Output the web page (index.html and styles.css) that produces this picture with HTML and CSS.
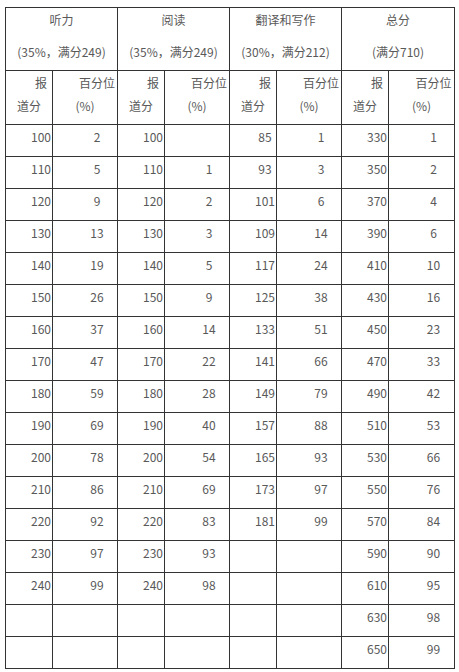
FILE: index.html
```html
<!DOCTYPE html>
<html lang="zh-CN">
<head>
<meta charset="utf-8">
<title>分数与百分位</title>
<link rel="stylesheet" href="styles.css">
</head>
<body>
<table class="score-table">
  <colgroup>
    <col class="c-score"><col class="c-pct">
    <col class="c-score"><col class="c-pct">
    <col class="c-score"><col class="c-pct">
    <col class="c-score"><col class="c-pct-last">
  </colgroup>
  <thead>
    <tr class="head-1">
      <th colspan="2"><p class="line">听力</p><p class="line">(35%，满分249)</p></th>
      <th colspan="2"><p class="line">阅读</p><p class="line">(35%，满分249)</p></th>
      <th colspan="2"><p class="line">翻译和写作</p><p class="line">(30%，满分212)</p></th>
      <th colspan="2"><p class="line">总分</p><p class="line">(满分710)</p></th>
    </tr>
    <tr class="head-2">
      <th>报道分</th><th>百分位(%)</th>
      <th>报道分</th><th>百分位(%)</th>
      <th>报道分</th><th>百分位(%)</th>
      <th>报道分</th><th>百分位(%)</th>
    </tr>
  </thead>
  <tbody>
    <tr><td>100</td><td>2</td><td>100</td><td></td><td>85</td><td>1</td><td>330</td><td>1</td></tr>
    <tr><td>110</td><td>5</td><td>110</td><td>1</td><td>93</td><td>3</td><td>350</td><td>2</td></tr>
    <tr><td>120</td><td>9</td><td>120</td><td>2</td><td>101</td><td>6</td><td>370</td><td>4</td></tr>
    <tr><td>130</td><td>13</td><td>130</td><td>3</td><td>109</td><td>14</td><td>390</td><td>6</td></tr>
    <tr><td>140</td><td>19</td><td>140</td><td>5</td><td>117</td><td>24</td><td>410</td><td>10</td></tr>
    <tr><td>150</td><td>26</td><td>150</td><td>9</td><td>125</td><td>38</td><td>430</td><td>16</td></tr>
    <tr><td>160</td><td>37</td><td>160</td><td>14</td><td>133</td><td>51</td><td>450</td><td>23</td></tr>
    <tr><td>170</td><td>47</td><td>170</td><td>22</td><td>141</td><td>66</td><td>470</td><td>33</td></tr>
    <tr><td>180</td><td>59</td><td>180</td><td>28</td><td>149</td><td>79</td><td>490</td><td>42</td></tr>
    <tr><td>190</td><td>69</td><td>190</td><td>40</td><td>157</td><td>88</td><td>510</td><td>53</td></tr>
    <tr><td>200</td><td>78</td><td>200</td><td>54</td><td>165</td><td>93</td><td>530</td><td>66</td></tr>
    <tr><td>210</td><td>86</td><td>210</td><td>69</td><td>173</td><td>97</td><td>550</td><td>76</td></tr>
    <tr><td>220</td><td>92</td><td>220</td><td>83</td><td>181</td><td>99</td><td>570</td><td>84</td></tr>
    <tr><td>230</td><td>97</td><td>230</td><td>93</td><td></td><td></td><td>590</td><td>90</td></tr>
    <tr><td>240</td><td>99</td><td>240</td><td>98</td><td></td><td></td><td>610</td><td>95</td></tr>
    <tr><td></td><td></td><td></td><td></td><td></td><td></td><td>630</td><td>98</td></tr>
    <tr><td></td><td></td><td></td><td></td><td></td><td></td><td>650</td><td>99</td></tr>
  </tbody>
</table>
</body>
</html>
```

FILE: styles.css
```css
html, body {
  margin: 0;
  padding: 0;
  background: #ffffff;
}

body {
  font-family: "Noto Sans CJK SC", "Liberation Sans", sans-serif;
  font-size: 12px;
  color: #595959;
}

.score-table {
  border-collapse: collapse;
  table-layout: fixed;
  width: 450px;
  margin: 7px 0 0 5px;
}

.c-score { width: 47px; }
.c-pct { width: 65px; }
.c-pct-last { width: 66px; }

.score-table th,
.score-table td {
  border: 1px solid #333333;
  padding: 0 0 8px 0;
  line-height: 23px;
  font-weight: normal;
  text-align: center;
  text-indent: 2em;
  vertical-align: top;
}

.head-1 th {
  text-indent: 0;
  padding-bottom: 7px;
}

.head-1 .line {
  margin: 0;
}

.head-1 .line + .line {
  margin-top: 9px;
}

.head-2 th {
  padding-bottom: 7px;
}
```
